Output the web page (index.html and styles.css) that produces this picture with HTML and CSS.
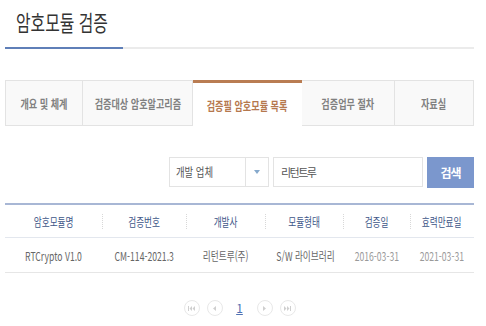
FILE: index.html
```html
<!DOCTYPE html>
<html lang="ko">
<head>
    <meta charset="UTF-8">
    <meta name="viewport" content="width=device-width, initial-scale=1.0">
    <title>암호모듈 검증</title>
    <link rel="stylesheet" href="styles.css">
</head>
<body>
    <div class="page">
        <div class="title-box">
            <h1><span class="sq-left">암호모듈 검증</span></h1>
        </div>
        <div class="title-line"><span class="title-line-on"></span></div>

        <ul class="tabs">
            <li class="tab tab-1"><span class="sq">개요 및 체계</span></li>
            <li class="tab tab-2"><span class="sq">검증대상 암호알고리즘</span></li>
            <li class="tab tab-3 active"><span class="sq">검증필 암호모듈 목록</span></li>
            <li class="tab tab-4"><span class="sq">검증업무 절차</span></li>
            <li class="tab tab-5"><span class="sq">자료실</span></li>
        </ul>

        <form class="search" onsubmit="return false">
            <div class="select-box">
                <span class="select-text"><span class="sq-left">개발 업체</span></span>
                <span class="select-arrow"></span>
            </div>
            <input type="text" class="search-input" value="리턴트루">
            <button type="submit" class="search-btn">검색</button>
        </form>

        <table class="list">
            <thead>
                <tr>
                    <th class="c1"><span class="sq">암호모듈명</span></th>
                    <th class="c2"><span class="sq">검증번호</span></th>
                    <th class="c3"><span class="sq">개발사</span></th>
                    <th class="c4"><span class="sq">모듈형태</span></th>
                    <th class="c5"><span class="sq">검증일</span></th>
                    <th class="c6"><span class="sq">효력만료일</span></th>
                </tr>
            </thead>
            <tbody>
                <tr>
                    <td><span class="sq">RTCrypto V1.0</span></td>
                    <td><span class="sq">CM-114-2021.3</span></td>
                    <td><span class="sq">리턴트루(주)</span></td>
                    <td><span class="sq">S/W 라이브러리</span></td>
                    <td class="date"><span class="sq">2016-03-31</span></td>
                    <td class="date"><span class="sq">2021-03-31</span></td>
                </tr>
            </tbody>
        </table>

        <div class="paging">
            <a class="pg-btn" href="#">
                <svg width="7" height="5" viewBox="0 0 7 5"><rect x="0" y="0" width="1" height="5" fill="#cfcfcf"/><path d="M4 0 L1.5 2.5 L4 5 Z M7 0 L4.5 2.5 L7 5 Z" fill="#cfcfcf"/></svg>
            </a>
            <a class="pg-btn" href="#">
                <svg width="3" height="5" viewBox="0 0 3 5"><path d="M3 0 L0 2.5 L3 5 Z" fill="#cfcfcf"/></svg>
            </a>
            <a class="pg-num" href="#">1</a>
            <a class="pg-btn" href="#">
                <svg width="3" height="5" viewBox="0 0 3 5"><path d="M0 0 L3 2.5 L0 5 Z" fill="#cfcfcf"/></svg>
            </a>
            <a class="pg-btn" href="#">
                <svg width="7" height="5" viewBox="0 0 7 5"><path d="M0 0 L2.5 2.5 L0 5 Z M3 0 L5.5 2.5 L3 5 Z" fill="#cfcfcf"/><rect x="6" y="0" width="1" height="5" fill="#cfcfcf"/></svg>
            </a>
        </div>
    </div>
</body>
</html>
```

FILE: styles.css
```css
body {
    margin: 0;
    background-color: #fff;
    font-family: "Noto Sans CJK KR", "Noto Sans", sans-serif;
    color: #555;
}
.page {
    padding: 0 12px 0 5px;
}
.title-box {
    height: 47px;
    padding-left: 11px;
}
h1 {
    margin: 0;
    padding-top: 5px;
    font-size: 22px;
    font-weight: 400;
    line-height: 32px;
    color: #333;
    white-space: nowrap;
}
.sq-left {
    display: inline-block;
    transform: scaleX(0.72);
    transform-origin: left center;
    white-space: nowrap;
}
.sq {
    display: inline-block;
    transform: scaleX(0.72);
    white-space: nowrap;
}
.title-line {
    height: 2px;
    background-color: #ebebeb;
}
.title-line-on {
    display: block;
    width: 118px;
    height: 2px;
    background-color: #5f7fb8;
}

/* tabs */
.tabs {
    display: flex;
    margin: 31px 0 0;
    padding: 0;
    list-style: none;
}
.tab {
    display: flex;
    align-items: center;
    justify-content: center;
    box-sizing: border-box;
    height: 46px;
    background-color: #f9f9f9;
    border: 1px solid #e3e3e3;
    border-left: none;
    font-size: 12px;
    font-weight: 700;
    color: #808080;
    white-space: nowrap;
}
.tab .sq {
    transform: scaleX(0.76);
}
.tab-1 { width: 78px; border-left: 1px solid #e3e3e3; }
.tab-2 { width: 110px; }
.tab-3 { width: 109px; }
.tab-4 { width: 93px; }
.tab-5 { width: 79px; }
.tab.active {
    background-color: #fff;
    border-top: 3px solid #b97c52;
    border-bottom: none;
    border-right: none;
    color: #b5784e;
    padding-top: 1px;
}

/* search */
.search {
    display: flex;
    justify-content: flex-end;
    gap: 4px;
    margin-top: 31px;
}
.select-box {
    display: flex;
    box-sizing: border-box;
    width: 100px;
    height: 30px;
    border: 1px solid #e3e3e3;
}
.select-text {
    flex: 1;
    padding-left: 6px;
    font-size: 12px;
    line-height: 28px;
    color: #555;
}
.select-text .sq-left {
    transform: scaleX(0.78);
}
.select-arrow {
    position: relative;
    width: 22px;
    border-left: 1px solid #e3e3e3;
}
.select-arrow::after {
    content: "";
    position: absolute;
    left: 8px;
    top: 12px;
    border-left: 3px solid transparent;
    border-right: 3px solid transparent;
    border-top: 4px solid #86a9cc;
}
.search-input {
    box-sizing: border-box;
    width: 150px;
    height: 30px;
    margin: 0;
    padding: 0 0 0 7px;
    border: 1px solid #e3e3e3;
    font-family: inherit;
    font-size: 11px;
    letter-spacing: -1.5px;
    color: #555;
    outline: none;
}
.search-btn {
    width: 47px;
    height: 31px;
    margin: 0;
    padding: 0;
    border: none;
    background-color: #7b97cd;
    color: #fff;
    font-family: inherit;
    font-size: 12px;
    font-weight: 700;
    letter-spacing: -1px;
    cursor: pointer;
}

/* table */
.list {
    width: 100%;
    margin-top: 15px;
    border-collapse: collapse;
    table-layout: fixed;
    border-top: 2px solid #a8b7d5;
    border-bottom: 1px solid #e6e6e6;
}
.list th {
    position: relative;
    height: 32px;
    padding: 0;
    font-size: 12px;
    font-weight: 400;
    color: #3d5688;
    border-bottom: 1px solid #e3e7ee;
}
.list th + th::before {
    content: "";
    position: absolute;
    left: 0;
    top: 9px;
    height: 15px;
    border-left: 1px dotted #d8d8d8;
}
.list td {
    height: 34px;
    padding: 0;
    text-align: center;
    font-size: 12px;
    color: #666;
}
.list td.date {
    color: #9a9a9a;
}
.c1 { width: 97px; }
.c2 { width: 84px; }
.c3 { width: 79px; }
.c4 { width: 78px; }
.c5 { width: 67px; }
.c6 { width: 64px; }

/* paging */
.paging {
    display: flex;
    justify-content: center;
    align-items: center;
    gap: 7px;
    margin-top: 27px;
}
.pg-btn {
    display: flex;
    align-items: center;
    justify-content: center;
    box-sizing: border-box;
    width: 16px;
    height: 16px;
    border: 1px solid #e8e8e8;
    border-radius: 50%;
}
.pg-num {
    width: 16px;
    margin: 0 2px;
    text-align: center;
    font-size: 12px;
    font-weight: 400;
    line-height: 16px;
    color: #4f71b3;
    text-decoration: underline;
}
```
